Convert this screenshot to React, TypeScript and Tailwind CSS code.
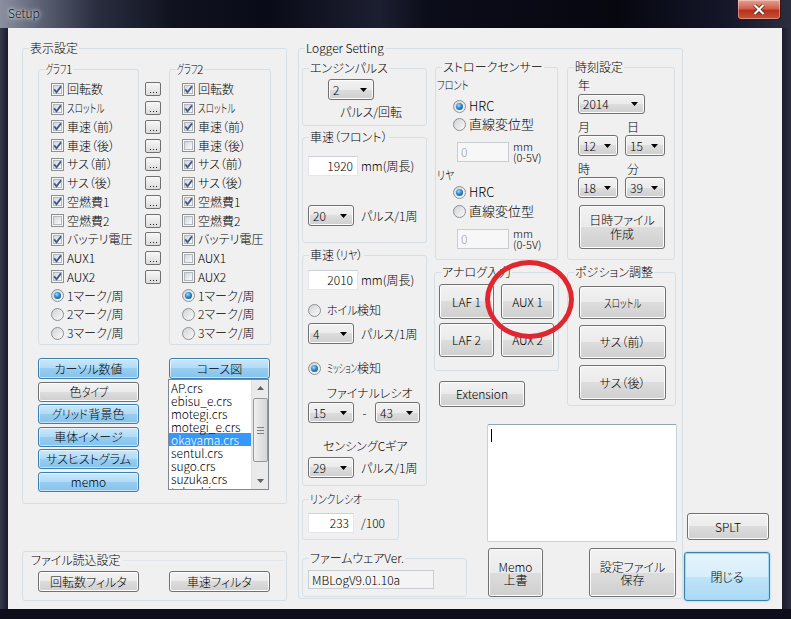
import React, { useLayoutEffect, useRef, useState } from "react";

const GRAY =
  "border border-[#707070] rounded-[3px] bg-[linear-gradient(#f2f2f2_0%,#ebebeb_50%,#dddddd_50%,#cfcfcf_100%)] shadow-[inset_0_0_0_1px_#fcfcfc]";
const BLUE =
  "border border-[#3c7fb1] rounded-[3px] bg-[linear-gradient(#cbe8fb_0%,#b0daf6_50%,#97cdf1_50%,#86c3ec_100%)] shadow-[inset_0_0_0_1px_rgba(255,255,255,0.55)]";

/* narrow katakana run: measured at runtime and condensed to the target width */
function Sq({ t, w }: { t: string; w: number }) {
  const ref = useRef<HTMLSpanElement>(null);
  const [scale, setScale] = useState<number | null>(null);
  useLayoutEffect(() => {
    if (ref.current) {
      const nw = ref.current.offsetWidth;
      if (nw > 0) setScale(w / nw);
    }
  }, [w, t]);
  return (
    <span
      className="inline-block whitespace-nowrap"
      style={scale != null ? { width: w } : undefined}
    >
      <span
        ref={ref}
        className="inline-block origin-left"
        style={scale != null ? { transform: `scaleX(${scale})` } : undefined}
      >
        {t}
      </span>
    </span>
  );
}

function Btn({
  children,
  className = "",
  blue = false,
}: {
  children: React.ReactNode;
  className?: string;
  blue?: boolean;
}) {
  return (
    <div
      className={
        (blue ? BLUE : GRAY) +
        " flex flex-col items-center justify-center text-center shrink-0 " +
        className
      }
    >
      {children}
    </div>
  );
}

function Group({
  title,
  className = "",
  children,
}: {
  title: React.ReactNode;
  className?: string;
  children?: React.ReactNode;
}) {
  return (
    <div
      className={
        "relative border border-[#d5dfe5] rounded-[3px] shrink-0 " + className
      }
    >
      <span className="absolute -top-[8px] left-[6px] px-[1px] bg-[#f0f0f0] leading-[14px] whitespace-nowrap">
        {title}
      </span>
      {children}
    </div>
  );
}

function Check({ on }: { on: boolean }) {
  return (
    <span className="w-[13px] h-[13px] border border-[#8e8f8f] bg-[#f6f6f6] flex items-center justify-center shrink-0 relative">
      <span className="w-[9px] h-[9px] border border-[#b4b9bf] bg-[linear-gradient(135deg,#d3d6da,#fbfbfb)]" />
      {on && (
        <svg
          width="11"
          height="11"
          viewBox="0 0 11 11"
          className="absolute left-[0px] top-[0px]"
        >
          <path
            d="M2.2 5.4 L4.5 8.2 L9 2.4"
            fill="none"
            stroke="#41588f"
            strokeWidth="1.8"
          />
        </svg>
      )}
    </span>
  );
}

function Radio({ on }: { on: boolean }) {
  return (
    <span className="w-[13px] h-[13px] rounded-full border border-[#8e8f8f] bg-[linear-gradient(135deg,#cfd2d6,#fbfbfb)] flex items-center justify-center shrink-0">
      {on && (
        <span className="w-[7px] h-[7px] rounded-full bg-[radial-gradient(circle_at_40%_35%,#9edcff_0%,#2e86c6_45%,#0c4a7e_100%)]" />
      )}
    </span>
  );
}

function Combo({ v, className = "" }: { v: string; className?: string }) {
  return (
    <div
      className={
        GRAY +
        " flex items-center justify-between pl-[4px] pr-[6px] shrink-0 " +
        className
      }
    >
      <span className="leading-[14px]">{v}</span>
      <svg width="7" height="4" viewBox="0 0 7 4">
        <path d="M0 0 H7 L3.5 4 Z" fill="#000" />
      </svg>
    </div>
  );
}

function TBox({
  v,
  className = "",
  left = false,
  disabled = false,
}: {
  v: string;
  className?: string;
  left?: boolean;
  disabled?: boolean;
}) {
  return (
    <div
      className={
        "border flex items-center shrink-0 " +
        (left ? "justify-start pl-[3px] " : "justify-end pr-[4px] ") +
        (disabled
          ? "bg-[#f7f7f7] text-[#a0a0a0] border-[#c9ccd0] "
          : "bg-white border-[#e3e7eb] border-t-[#cdd1d6] ") +
        className
      }
    >
      {v}
    </div>
  );
}

function Dots() {
  return (
    <div className="w-[16px] h-[14px] border border-[#707070] rounded-[2px] bg-[linear-gradient(#f7f7f7,#dcdcdc)] flex items-end justify-center gap-[2px] pb-[2px]">
      <span className="w-[1px] h-[1px] bg-[#222]" />
      <span className="w-[1px] h-[1px] bg-[#222]" />
      <span className="w-[1px] h-[1px] bg-[#222]" />
    </div>
  );
}

const CHK_LABELS: React.ReactNode[] = [
  "回転数",
  <Sq t="スロットル" w={37} />,
  "車速（前）",
  "車速（後）",
  "サス（前）",
  "サス（後）",
  "空燃費1",
  "空燃費2",
  "バッテリ電圧",
  "AUX1",
  "AUX2",
];
const G1 = [true, true, true, true, true, true, true, false, true, true, true];
const G2 = [true, true, true, false, true, true, true, false, true, false, false];
const MARKS = ["1マーク/周", "2マーク/周", "3マーク/周"];

function GraphRows({ states }: { states: boolean[] }) {
  return (
    <div className="pt-[10px] pl-[12px] flex flex-col">
      {CHK_LABELS.map((l, i) => (
        <div key={i} className="h-[18.75px] flex items-center">
          <Check on={states[i]} />
          <span className="ml-[3px] whitespace-nowrap">{l}</span>
        </div>
      ))}
      {MARKS.map((l, i) => (
        <div key={l} className="h-[18.75px] flex items-center">
          <Radio on={i === 0} />
          <span className="ml-[3px] whitespace-nowrap">{l}</span>
        </div>
      ))}
    </div>
  );
}

const COURSES = [
  "AP.crs",
  "ebisu_e.crs",
  "motegi.crs",
  "motegi_e.crs",
  "okayama.crs",
  "sentul.crs",
  "sugo.crs",
  "suzuka.crs",
  "tokachi.crs",
];

function ListBox() {
  return (
    <div className="w-[101px] h-[111px] bg-white border border-[#828790] flex overflow-hidden -ml-[1px]">
      <div className="flex-1 pt-[1px] overflow-hidden">
        {COURSES.map((c) => (
          <div
            key={c}
            className={
              "h-[13px] leading-[13px] pl-[2px] whitespace-nowrap " +
              (c === "okayama.crs" ? "bg-[#3399ff] text-white" : "")
            }
          >
            {c}
          </div>
        ))}
      </div>
      <div className="w-[17px] bg-[#eaeaea] border-l border-[#e0e0e0] flex flex-col items-center">
        <div className="h-[16px] w-full flex items-center justify-center">
          <svg width="7" height="4" viewBox="0 0 7 4">
            <path d="M0 4 L3.5 0 L7 4 Z" fill="#606060" />
          </svg>
        </div>
        <div className="mt-[2px] w-[15px] h-[64px] rounded-[2px] border border-[#979797] bg-[linear-gradient(90deg,#f0f0f0,#e2e2e2_50%,#d6d6d6)] flex flex-col items-center justify-center gap-[2px]">
          <span className="w-[7px] h-[1px] bg-[#808080]" />
          <span className="w-[7px] h-[1px] bg-[#808080]" />
          <span className="w-[7px] h-[1px] bg-[#808080]" />
        </div>
        <div className="mt-auto h-[16px] w-full flex items-center justify-center">
          <svg width="7" height="4" viewBox="0 0 7 4">
            <path d="M0 0 H7 L3.5 4 Z" fill="#606060" />
          </svg>
        </div>
      </div>
    </div>
  );
}

function MmLabel() {
  return (
    <div className="ml-[4px] flex flex-col text-[11px] leading-[11px]">
      <span>mm</span>
      <span>(0-5V)</span>
    </div>
  );
}

export default function App() {
  return (
    <div className="relative w-[791px] h-[619px] overflow-hidden bg-[#0d0e1a] text-black text-[12px] leading-[14px] font-light font-['Noto_Sans_CJK_JP','Noto_Sans',sans-serif] [font-feature-settings:'palt']">
      {/* title bar */}
      <div className="h-[28px] flex items-start bg-[linear-gradient(90deg,#8a90a0_0%,#5d6375_5%,#2a2e40_12%,#10121f_22%,#0a0b18_34%,#1c1f30_48%,#0c0d1a_54%,#06070f_78%,#15172a_92%,#2b2e3e_100%)]">
        <span className="ml-[8px] mt-[6px] text-[12px] leading-[14px] text-[#111] [text-shadow:0_0_6px_#ffffff,0_0_3px_#ffffff]">
          Setup
        </span>
        <div className="ml-auto mr-[10px] w-[44px] h-[20px] rounded-b-[4px] border border-t-0 border-[#3b1410] bg-[linear-gradient(#e8a093_0%,#d0604c_45%,#b7321c_55%,#c9523a_100%)] shadow-[inset_0_0_0_1px_rgba(255,255,255,0.35)] flex items-center justify-center">
          <svg width="12" height="11" viewBox="0 0 12 11">
            <path
              d="M1.5 1 L10.5 10 M10.5 1 L1.5 10"
              stroke="#4a1a12"
              strokeWidth="3.6"
            />
            <path
              d="M1.5 1 L10.5 10 M10.5 1 L1.5 10"
              stroke="#ffffff"
              strokeWidth="2.2"
            />
          </svg>
        </div>
      </div>

      {/* body */}
      <div className="flex h-[581px]">
        <div className="w-[8px] bg-[linear-gradient(90deg,#363a4c,#1a1c2a)]" />
        <div className="w-[774px] h-[581px] bg-[#f0f0f0] flex items-start">
          {/* left column */}
          <div className="ml-[14px] mt-[20px] w-[265px] flex flex-col">
            <Group title="表示設定" className="w-[265px] h-[456px]">
              <div className="flex items-start pl-[15px] pt-[20px]">
                <Group
                  title={
                    <>
                      <Sq t="グラフ" w={20} />1
                    </>
                  }
                  className="w-[101px] h-[276px]"
                >
                  <GraphRows states={G1} />
                </Group>
                <div className="ml-[6px] pt-[11px] flex flex-col">
                  {CHK_LABELS.map((_, i) => (
                    <div key={i} className="h-[18.75px] flex items-center">
                      <Dots />
                    </div>
                  ))}
                </div>
                <Group
                  title={
                    <>
                      <Sq t="グラフ" w={20} />2
                    </>
                  }
                  className="ml-[8px] w-[102px] h-[276px]"
                >
                  <GraphRows states={G2} />
                </Group>
              </div>
              <div className="flex items-start pl-[15px] mt-[13px]">
                <div className="w-[101px] flex flex-col gap-[2.6px]">
                  <Btn blue className="w-[101px] h-[21px]">カーソル数値</Btn>
                  <Btn className="w-[101px] h-[20px]">
                    <span>
                      色<Sq t="タイプ" w={26} />
                    </span>
                  </Btn>
                  <Btn blue className="w-[101px] h-[20px]">
                    <span>
                      <Sq t="グリッド" w={36} />
                      背景色
                    </span>
                  </Btn>
                  <Btn blue className="w-[101px] h-[20px]">車体イメージ</Btn>
                  <Btn blue className="w-[101px] h-[20px]">サスヒストグラム</Btn>
                  <Btn blue className="w-[101px] h-[20px]">memo</Btn>
                </div>
                <div className="ml-[30px] w-[101px] flex flex-col">
                  <Btn blue className="w-[101px] h-[21px]">コース図</Btn>
                  <ListBox />
                </div>
              </div>
            </Group>

            <div className="relative mt-[47px] h-[50px] border border-[#d5dfe5] rounded-[3px]">
              <div className="flex items-center mt-[1px]">
                <span className="ml-[8px] leading-[14px]">ファイル読込設定</span>
                <span className="ml-[2px] flex-1 mr-[2px] border-t border-[#dfe5ea]" />
              </div>
              <div className="flex pl-[15px] mt-[4px]">
                <Btn className="w-[101px] h-[21px]">回転数フィルタ</Btn>
                <Btn className="ml-[30px] w-[101px] h-[21px]">車速フィルタ</Btn>
              </div>
            </div>
          </div>

          {/* Logger Setting */}
          <Group title="Logger Setting" className="ml-[11px] mt-[20px] w-[385px] h-[551px]">
            <div className="flex items-start pl-[3px]">
              {/* column 1 */}
              <div className="w-[125px] flex flex-col mt-[19px]">
                <Group title="エンジンパルス" className="h-[58px]">
                  <Combo v="2" className="ml-[25px] mt-[10px] w-[46px] h-[21px]" />
                  <div className="ml-[37px] mt-[5px]">パルス/回転</div>
                </Group>

                <Group title="車速（フロント）" className="mt-[11px] h-[106px]">
                  <div className="flex items-center mt-[18px] ml-[5px]">
                    <TBox v="1920" className="w-[50px] h-[20px]" />
                    <span className="ml-[3px]">mm(周長)</span>
                  </div>
                  <div className="flex items-center mt-[29px] ml-[5px]">
                    <Combo v="20" className="w-[46px] h-[21px]" />
                    <span className="ml-[7px]">パルス/1周</span>
                  </div>
                </Group>

                <Group
                  title={
                    <>
                      車速（<Sq t="リヤ" w={17} />）
                    </>
                  }
                  className="mt-[12px] h-[231px]"
                >
                  <div className="flex items-center mt-[14px] ml-[5px]">
                    <TBox v="2010" className="w-[50px] h-[20px]" />
                    <span className="ml-[3px]">mm(周長)</span>
                  </div>
                  <div className="flex items-center mt-[13px] ml-[5px] h-[14px]">
                    <Radio on={false} />
                    <span className="ml-[6px] whitespace-nowrap">
                      <Sq t="ホイル" w={30} />
                      検知
                    </span>
                  </div>
                  <div className="flex items-center mt-[6px] ml-[5px]">
                    <Combo v="4" className="w-[46px] h-[21px]" />
                    <span className="ml-[7px]">パルス/1周</span>
                  </div>
                  <div className="flex items-center mt-[17px] ml-[5px] h-[14px]">
                    <Radio on />
                    <span className="ml-[6px] whitespace-nowrap">
                      <Sq t="ミッション" w={30} />
                      検知
                    </span>
                  </div>
                  <div className="ml-[24px] mt-[11px]">ファイナルレシオ</div>
                  <div className="flex items-center mt-[2px] ml-[5px]">
                    <Combo v="15" className="w-[46px] h-[21px]" />
                    <span className="w-[21px] text-center">-</span>
                    <Combo v="43" className="w-[45px] h-[21px]" />
                  </div>
                  <div className="ml-[20px] mt-[16px]">センシングCギア</div>
                  <div className="flex items-center mt-[4px] ml-[5px]">
                    <Combo v="29" className="w-[46px] h-[21px]" />
                    <span className="ml-[7px]">パルス/1周</span>
                  </div>
                </Group>

                <Group
                  title={<Sq t="リンクレシオ" w={52} />}
                  className="mt-[13px] w-[97px] h-[41px]"
                >
                  <div className="flex items-center mt-[13px] ml-[5px]">
                    <TBox v="233" className="w-[46px] h-[20px]" />
                    <span className="ml-[7px]">/100</span>
                  </div>
                </Group>

                <Group title="ファームウェアVer." className="mt-[18px] w-[165px] h-[39px]">
                  <div className="mt-[11px] ml-[5px] w-[126px] h-[19px] border border-[#c9ccd0] bg-[#f4f4f4] flex items-center pl-[3px]">
                    MBLogV9.01.10a
                  </div>
                </Group>
              </div>

              {/* right area */}
              <div className="ml-[8px] w-[242px] mt-[18px] flex flex-col">
                <div className="flex items-start">
                  <Group title="ストロークセンサー" className="w-[123px] h-[193px]">
                    <div className="ml-[1px] mt-[10px]">
                      <Sq t="フロント" w={32} />
                    </div>
                    <div className="flex items-center mt-[7px] ml-[17px] h-[14px]">
                      <Radio on />
                      <span className="ml-[3px] text-[13px]">HRC</span>
                    </div>
                    <div className="flex items-center mt-[4px] ml-[17px] h-[14px]">
                      <Radio on={false} />
                      <span className="ml-[3px] text-[13px]">直線変位型</span>
                    </div>
                    <div className="flex items-center mt-[10px] ml-[21px]">
                      <TBox v="0" left disabled className="w-[52px] h-[20px]" />
                      <MmLabel />
                    </div>
                    <div className="ml-[1px] mt-[5px]">
                      <Sq t="リヤ" w={17} />
                    </div>
                    <div className="flex items-center mt-[3px] ml-[17px] h-[14px]">
                      <Radio on />
                      <span className="ml-[3px] text-[13px]">HRC</span>
                    </div>
                    <div className="flex items-center mt-[5px] ml-[17px] h-[14px]">
                      <Radio on={false} />
                      <span className="ml-[3px] text-[13px]">直線変位型</span>
                    </div>
                    <div className="flex items-center mt-[10px] ml-[21px]">
                      <TBox v="0" left disabled className="w-[52px] h-[20px]" />
                      <MmLabel />
                    </div>
                  </Group>

                  <Group title="時刻設定" className="ml-[9px] w-[108px] h-[193px]">
                    <div className="ml-[10px] mt-[10px]">年</div>
                    <Combo v="2014" className="ml-[10px] mt-[2px] w-[67px] h-[20px]" />
                    <div className="flex ml-[10px] mt-[6px]">
                      <span className="w-[49px]">月</span>
                      <span>日</span>
                    </div>
                    <div className="flex ml-[10px] mt-[1px]">
                      <Combo v="12" className="w-[40px] h-[21px]" />
                      <Combo v="15" className="ml-[7px] w-[40px] h-[21px]" />
                    </div>
                    <div className="flex ml-[10px] mt-[6px]">
                      <span className="w-[49px]">時</span>
                      <span>分</span>
                    </div>
                    <div className="flex ml-[10px] mt-[1px]">
                      <Combo v="18" className="w-[40px] h-[21px]" />
                      <Combo v="39" className="ml-[7px] w-[40px] h-[21px]" />
                    </div>
                    <Btn className="ml-[11px] mt-[7px] w-[86px] h-[44px]">
                      <span>日時ファイル</span>
                      <span>作成</span>
                    </Btn>
                  </Group>
                </div>

                <div className="flex items-start mt-[12px] -ml-[1px]">
                  <div className="w-[125px] flex flex-col">
                    <Group title="アナログ入力" className="h-[99px]">
                      <div className="grid grid-cols-[55px_53px] gap-x-[7px] gap-y-[4px] ml-[4px] mt-[11px]">
                        <Btn className="h-[35px]">LAF 1</Btn>
                        <Btn className="h-[35px]">AUX 1</Btn>
                        <Btn className="h-[34px]">LAF 2</Btn>
                        <Btn className="h-[34px]">AUX 2</Btn>
                      </div>
                    </Group>
                    <Btn className="ml-[5px] mt-[10px] w-[86px] h-[26px]">Extension</Btn>
                  </div>
                  <Group title="ポジション調整" className="ml-[8px] w-[109px] h-[134px]">
                    <div className="flex flex-col gap-[6px] ml-[11px] mt-[13px]">
                      <Btn className="w-[87px] h-[33px]">
                        <span>
                          <Sq t="スロットル" w={37} />
                        </span>
                      </Btn>
                      <Btn className="w-[87px] h-[34px]">サス（前）</Btn>
                      <Btn className="w-[87px] h-[35px]">サス（後）</Btn>
                    </div>
                  </Group>
                </div>

                <div className="ml-[52px] mt-[17px] w-[190px] h-[118px] bg-white border border-[#c5d3df] border-t-[#8fa3b5] rounded-[2px] pl-[3px] pt-[4px]">
                  <div className="w-[1px] h-[13px] bg-black" />
                </div>

                <div className="flex mt-[6px]">
                  <Btn className="ml-[53px] w-[55px] h-[49px] leading-[13px]">
                    <span>Memo</span>
                    <span>上書</span>
                  </Btn>
                  <Btn className="ml-[46px] w-[87px] h-[49px] leading-[13px]">
                    <span>設定ファイル</span>
                    <span>保存</span>
                  </Btn>
                </div>
              </div>
            </div>
          </Group>

          {/* right column */}
          <div className="ml-[1px] w-[86px] flex flex-col">
            <Btn className="mt-[485px] ml-[3px] w-[82px] h-[27px]">SPLT</Btn>
            <div className="mt-[12px] w-[86px] h-[49px] rounded-[3px] border border-[#3c7fb1] bg-[linear-gradient(#e6f5fd_0%,#d6eefb_50%,#bfe4f8_50%,#abdaf4_100%)] shadow-[inset_0_0_0_1px_#9ed8f7,0_0_2px_#6ec3f2] flex items-center justify-center">
              閉じる
            </div>
          </div>
        </div>
        <div className="flex-1 bg-[linear-gradient(90deg,#1a1c2a,#2c2f40)]" />
      </div>

      {/* red annotation circle */}
      <div className="absolute left-[485px] top-[260px] w-[89px] h-[79px] rounded-[50%] border-[5px] border-[#e0262e]" />
    </div>
  );
}
